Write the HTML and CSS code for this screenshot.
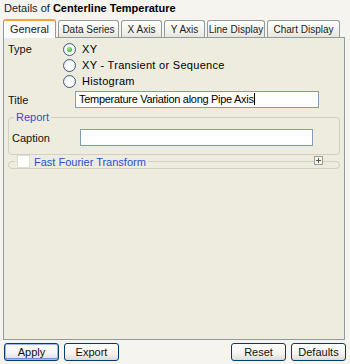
FILE: index.html
```html
<!DOCTYPE html>
<html>
<head>
<meta charset="utf-8">
<link rel="stylesheet" href="styles.css">
</head>
<body>
<div class="header">Details of <b>Centerline Temperature</b></div>
<div class="tabs">
  <div class="tab active t-general">General</div>
  <div class="tab t-data">Data Series</div>
  <div class="tab t-x">X Axis</div>
  <div class="tab t-y">Y Axis</div>
  <div class="tab t-line">Line Display</div>
  <div class="tab t-chart">Chart Display</div>
</div>
<div class="panel">
  <div class="row type-row">
    <div class="label type-label">Type</div>
    <div class="radios">
      <div class="radio-item"><span class="radio checked"></span>XY</div>
      <div class="radio-item"><span class="radio"></span>XY - Transient or Sequence</div>
      <div class="radio-item"><span class="radio"></span>Histogram</div>
    </div>
  </div>
  <div class="row title-row">
    <div class="label title-label">Title</div>
    <div class="input title-input">Temperature Variation along Pipe Axis<span class="caret"></span></div>
  </div>
  <div class="group report">
    <div class="legend">Report</div>
    <div class="row caption-row">
      <div class="label caption-label">Caption</div>
      <div class="input caption-input"></div>
    </div>
  </div>
  <div class="group fft">
    <div class="legend fft-legend"><span class="checkbox"></span>Fast Fourier Transform</div>
    <span class="expander"><svg width="9" height="9" viewBox="0 0 9 9"><rect x="0.5" y="0.5" width="8" height="8" fill="#f4f4f0" stroke="#9a9a8e"/><path d="M2 4.5h5M4.5 2v5" stroke="#555" stroke-width="1"/></svg></span>
  </div>
</div>
<div class="footer">
  <div class="btns">
    <div class="btn default">Apply</div>
    <div class="btn">Export</div>
  </div>
  <div class="btns">
    <div class="btn">Reset</div>
    <div class="btn">Defaults</div>
  </div>
</div>
</body>
</html>
```
FILE: styles.css
```css
html, body {
  margin: 0;
  padding: 0;
}
body {
  width: 350px;
  height: 364px;
  background: #f5f4ef;
  font-family: "Liberation Sans", Arial, sans-serif;
  font-size: 11px;
  color: #000;
  overflow: hidden;
}
.header {
  height: 19px;
  line-height: 17px;
  padding-left: 4px;
  color: #222;
}
.header b {
  font-weight: bold;
  color: #000;
}
.tabs {
  display: flex;
  align-items: flex-end;
  height: 18px;
  margin-left: 3px;
  gap: 2px;
  position: relative;
  z-index: 1;
}
.tab {
  flex: none;
  white-space: nowrap;
  text-align: center;
  height: 17px;
  line-height: 17px;
  border: 1px solid #919b9c;
  border-bottom: none;
  border-radius: 3px 3px 0 0;
  background: linear-gradient(#ffffff, #f0efe8 70%, #e4e3dc);
  color: #222;
  box-sizing: border-box;
  font-size: 10px;
}
.t-general { width: 53px; }
.t-data { width: 61px; }
.t-x { width: 41px; }
.t-y { width: 41px; }
.t-line { width: 58px; }
.t-chart { width: 73px; }
.tab.active {
  height: 19px;
  margin-bottom: -1px;
  font-size: 11px;
  background: #fcfcfe;
  border-top: 2px solid #f7a333;
  line-height: 17px;
}
.panel {
  margin: 0 5px 0 3px;
  height: 303px;
  border: 1px solid #919b9c;
  background: #eeebdf;
  box-sizing: border-box;
  padding: 4px 4px 0 4px;
}
.row {
  display: flex;
  align-items: center;
}
.type-row {
  align-items: flex-start;
}
.label {
  color: #111;
}
.type-label {
  width: 55px;
  padding-top: 1px;
}
.radios {
  display: flex;
  flex-direction: column;
  gap: 2px;
}
.radio-item {
  display: flex;
  align-items: center;
  height: 14px;
  letter-spacing: 0.3px;
}
.radio {
  width: 11px;
  height: 11px;
  border-radius: 50%;
  border: 1px solid #3a5f8a;
  background: radial-gradient(circle at 60% 60%, #ffffff 30%, #e2e2dc);
  margin-right: 6px;
  position: relative;
  flex: none;
}
.radio.checked::after {
  content: "";
  position: absolute;
  left: 3px;
  top: 3px;
  width: 5px;
  height: 5px;
  border-radius: 50%;
  background: radial-gradient(circle at 40% 35%, #8ff08a, #21a11d);
}
.title-row {
  margin-top: 3px;
}
.title-label {
  width: 67px;
}
.input {
  height: 17px;
  line-height: 15px;
  border: 1px solid #7f9db9;
  background: #fff;
  box-sizing: border-box;
  padding: 0 3px;
  white-space: nowrap;
  overflow: hidden;
}
.title-input {
  width: 244px;
  letter-spacing: -0.3px;
}
.caret {
  display: inline-block;
  width: 1px;
  height: 12px;
  background: #000;
  vertical-align: -2px;
}
.group {
  border: 1px solid #d3d0bf;
  border-radius: 4px;
  position: relative;
}
.legend {
  position: absolute;
  top: -7px;
  left: 5px;
  padding: 0 2px;
  background: #eeebdf;
  color: #1f52d8;
  line-height: 12px;
}
.report {
  margin-top: 9px;
  height: 38px;
  box-sizing: border-box;
  padding: 11px 0 0 3px;
}
.caption-label {
  width: 68px;
}
.caption-input {
  width: 233px;
}
.fft {
  height: 6px;
  border-radius: 4px;
  margin-top: 6px;
}
.fft-legend {
  display: flex;
  align-items: center;
  top: -7px;
  left: 6px;
}
.checkbox {
  width: 11px;
  height: 11px;
  background: #fff;
  border: 1px solid #e0ddd0;
  margin-right: 4px;
  display: inline-block;
}
.expander {
  position: absolute;
  right: 16px;
  top: -6px;
  width: 9px;
  height: 9px;
  background: #eeebdf;
  line-height: 0;
}
.footer {
  display: flex;
  justify-content: space-between;
  padding: 3px 4px 0 4px;
}
.btns {
  display: flex;
  gap: 5px;
}
.btn {
  width: 55px;
  height: 18px;
  line-height: 16px;
  text-align: center;
  border: 1px solid #003c74;
  border-radius: 3px;
  background: linear-gradient(#ffffff, #f3f3ef 60%, #dedcd2);
  box-sizing: border-box;
  color: #111;
}
.btn.default {
  box-shadow: inset 0 0 0 1px #9bbbf0, inset 0 -1px 0 1px #6d93e0;
}
```
